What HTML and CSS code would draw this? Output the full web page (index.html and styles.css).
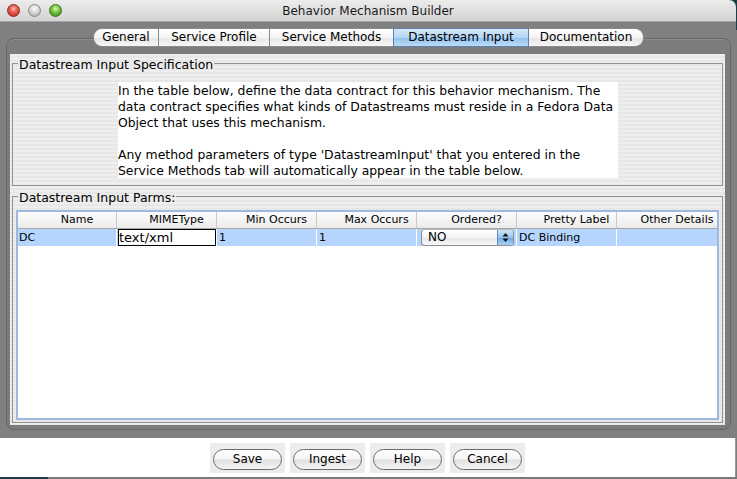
FILE: index.html
```html
<!DOCTYPE html>
<html>
<head>
<meta charset="utf-8">
<title>Behavior Mechanism Builder</title>
<link rel="stylesheet" href="styles.css">
</head>
<body>
<div class="window">
  <div class="titlebar">
    <div class="lights">
      <span class="light red"></span>
      <span class="light grey"></span>
      <span class="light green"></span>
    </div>
    <div class="title">Behavior Mechanism Builder</div>
    <div class="spacer"></div>
  </div>
  <div class="main">
    <div class="tabs">
      <div class="tab first w-general">General</div>
      <div class="tab w-profile">Service Profile</div>
      <div class="tab w-methods">Service Methods</div>
      <div class="tab active w-input">Datastream Input</div>
      <div class="tab last w-doc">Documentation</div>
    </div>
    <div class="pane">
      <div class="panel">
        <fieldset class="group spec">
          <legend>Datastream Input Specification</legend>
          <div class="note">In the table below, define the data contract for this behavior mechanism. The<br>data contract specifies what kinds of Datastreams must reside in a Fedora Data<br>Object that uses this mechanism.<br><br>Any method parameters of type 'DatastreamInput' that you entered in the<br>Service Methods tab will automatically appear in the table below.</div>
        </fieldset>
        <fieldset class="group parms">
          <legend>Datastream Input Parms:</legend>
          <div class="table">
            <div class="thead">
              <div class="th">Name</div>
              <div class="th">MIMEType</div>
              <div class="th">Min Occurs</div>
              <div class="th">Max Occurs</div>
              <div class="th">Ordered?</div>
              <div class="th">Pretty Label</div>
              <div class="th last-col">Other Details</div>
            </div>
            <div class="trow">
              <div class="td first-col">DC</div>
              <div class="td edit-cell"><div class="editor">text/xml</div></div>
              <div class="td">1</div>
              <div class="td">1</div>
              <div class="td combo-cell">
                <div class="combo">
                  <span class="combo-text">NO</span>
                  <span class="combo-arrows"><svg width="7" height="11" viewBox="0 0 7 11"><polygon points="0.5,4.5 3.5,1 6.5,4.5" fill="#111"/><polygon points="0.5,6.5 3.5,10 6.5,6.5" fill="#111"/></svg></span>
                </div>
              </div>
              <div class="td">DC Binding</div>
              <div class="td last-col"></div>
            </div>
          </div>
        </fieldset>
      </div>
    </div>
  </div>
  <div class="footer">
    <div class="btnwrap"><button class="btn">Save</button></div>
    <div class="btnwrap"><button class="btn">Ingest</button></div>
    <div class="btnwrap"><button class="btn">Help</button></div>
    <div class="btnwrap"><button class="btn">Cancel</button></div>
  </div>
</div>
<div class="desk"></div>
</body>
</html>
```

FILE: styles.css
```css
* { box-sizing: border-box; }
html, body { margin: 0; padding: 0; }
body {
  width: 737px;
  height: 479px;
  overflow: hidden;
  background: linear-gradient(#1b3d45 0 30px, #7e7e7e 30px);
  font-family: "DejaVu Sans", "Liberation Sans", sans-serif;
  color: #000;
}
.window {
  width: 736px;
  height: 477px;
  display: flex;
  flex-direction: column;
}
.titlebar {
  height: 22px;
  flex: none;
  display: grid;
  grid-template-columns: 1fr auto 1fr;
  align-items: center;
  background: linear-gradient(#ececec, #d3d3d3);
  border-bottom: 1px solid #a2a2a2;
  border-radius: 0 7px 0 0;
}
.lights { display: flex; gap: 8px; padding-left: 7px; }
.light {
  width: 13px;
  height: 13px;
  border-radius: 50%;
  display: block;
}
.red {
  background: radial-gradient(circle at 50% 35%, #ffc0b6 0, #ea5a4e 40%, #b52116 100%);
  border: 1px solid #8e2c22;
}
.grey {
  background: radial-gradient(circle at 50% 35%, #ffffff 0, #d6d6d6 45%, #a3a3a3 100%);
  border: 1px solid #8a8a8a;
}
.green {
  background: radial-gradient(circle at 50% 35%, #dcf8b8 0, #79c744 40%, #2f7d14 100%);
  border: 1px solid #3d7522;
}
.title {
  font-size: 12px;
  color: #1a1a1a;
  white-space: nowrap;
}
.main {
  flex: 1;
  background: #808080;
  padding: 6px 5px 8px 6px;
  display: flex;
  flex-direction: column;
}
.tabs {
  display: flex;
  justify-content: center;
  height: 19px;
  flex: none;
  position: relative;
  z-index: 1;
}
.tab {
  height: 19px;
  font-size: 12px;
  line-height: 17px;
  text-align: center;
  white-space: nowrap;
  border: 1px solid #8a8a8a;
  border-right: none;
  background: linear-gradient(#ffffff, #f4f4f4 50%, #e6e6e6 51%, #f6f6f6);
}
.tab.first { border-radius: 9px 0 0 9px; }
.tab.last { border-right: 1px solid #8a8a8a; border-radius: 0 9px 9px 0; }
.tab.active {
  background: linear-gradient(#d6e8fa, #b5d5f4 50%, #8fc1ee 51%, #bcdcf8);
  border-color: #5d80ad;
}
.w-general { width: 65px; }
.w-profile { width: 111px; }
.w-methods { width: 124px; }
.w-input { width: 135px; }
.w-doc { width: 116px; }
.tab.active + .tab { border-left-color: #5d80ad; }

.pane {
  flex: 1;
  margin-top: -9px;
  border: 1px solid #666666;
  border-radius: 8px;
  padding: 15px 5px 4px 3px;
  display: flex;
  background: #7c7c7c;
  box-shadow: inset 0 1px 0 #8e8e8e;
}
.panel {
  flex: 1;
  background: repeating-linear-gradient(#eeeeee 0 2px, #e7e7e7 2px 4px);
  padding: 0 2px 2px 2px;
  display: flex;
  flex-direction: column;
}
.group {
  margin: 0;
  padding: 0;
  border: 1px solid #929292;
  min-width: 0;
}
.group legend {
  margin-left: 5px;
  padding: 4px 1px 0;
  font-size: 12.5px;
  line-height: 14px;
  white-space: nowrap;
}
.spec { flex: none; }
.note {
  margin: 10px 0 7px 105px;
  width: 500px;
  height: 96px;
  padding-top: 1px;
  overflow: hidden;
  background: #ffffff;
  font-size: 12.4px;
  line-height: 16px;
  white-space: nowrap;
}
.parms { flex: 1; margin-top: 1px; }
.table {
  margin: 5px 3px 2px 3px;
  height: 210px;
  border: 2px solid #9dbade;
  background: #ffffff;
}
.thead, .trow {
  display: grid;
  grid-template-columns: 99px repeat(6, 100px);
}
.thead {
  height: 17px;
  border-bottom: 1px solid #a8a8a8;
  background: linear-gradient(#fdfdfd, #ebebeb);
}
.th {
  font-size: 11px;
  line-height: 16px;
  text-align: center;
  padding-left: 20px;
  white-space: nowrap;
  border-right: 1px solid #c9c9c9;
}
.th.last-col { border-right: none; }
.trow {
  height: 17px;
  background: #b5d5ff;
}
.td {
  font-size: 11px;
  line-height: 17px;
  padding-left: 2px;
  white-space: nowrap;
  border-right: 1px solid #ffffff;
}
.td.first-col { padding-left: 1px; }
.td.last-col { border-right: none; }
.td.edit-cell { padding-left: 1px; }
.editor {
  height: 17px;
  border: 1px solid #000000;
  background: #ffffff;
  font-size: 13px;
  line-height: 15px;
}
.td.combo-cell { padding-left: 4px; }
.combo {
  display: flex;
  width: 93px;
  height: 17px;
  border: 1px solid #8d8d8d;
  border-top-color: #b8b8b8;
  border-radius: 4px;
  overflow: hidden;
  background: linear-gradient(#ffffff, #f3f3f3 50%, #e6e6e6 51%, #f7f7f7);
}
.combo-text {
  flex: 1;
  font-size: 12px;
  line-height: 15px;
  padding-left: 6px;
}
.combo-arrows {
  width: 16px;
  display: flex;
  align-items: center;
  justify-content: center;
  background: linear-gradient(#d2e6f9, #95c4ef 50%, #6eaae6 51%, #a8d1f6);
  border-left: 1px solid #6a8ebd;
}
.footer {
  height: 39px;
  flex: none;
  background: #ffffff;
  display: flex;
  justify-content: center;
  gap: 5px;
  padding-top: 5px;
  border-right: 1px solid #9a9a9a;
}
.btnwrap {
  width: 75px;
  height: 30px;
  background: #ececec;
  padding: 6px 3px 3px;
}
.btn {
  display: block;
  width: 69px;
  height: 21px;
  padding: 0;
  border: 1px solid #6c6c6c;
  border-radius: 11px;
  background: linear-gradient(#fefefe, #f6f6f6 45%, #e2e2e2 55%, #f4f4f4);
  font-family: "DejaVu Sans", "Liberation Sans", sans-serif;
  font-size: 12px;
  line-height: 19px;
  color: #000;
}
.desk {
  height: 2px;
  background: linear-gradient(to right, #1c3e46 48px, #7a7a7a 48px);
}
```
